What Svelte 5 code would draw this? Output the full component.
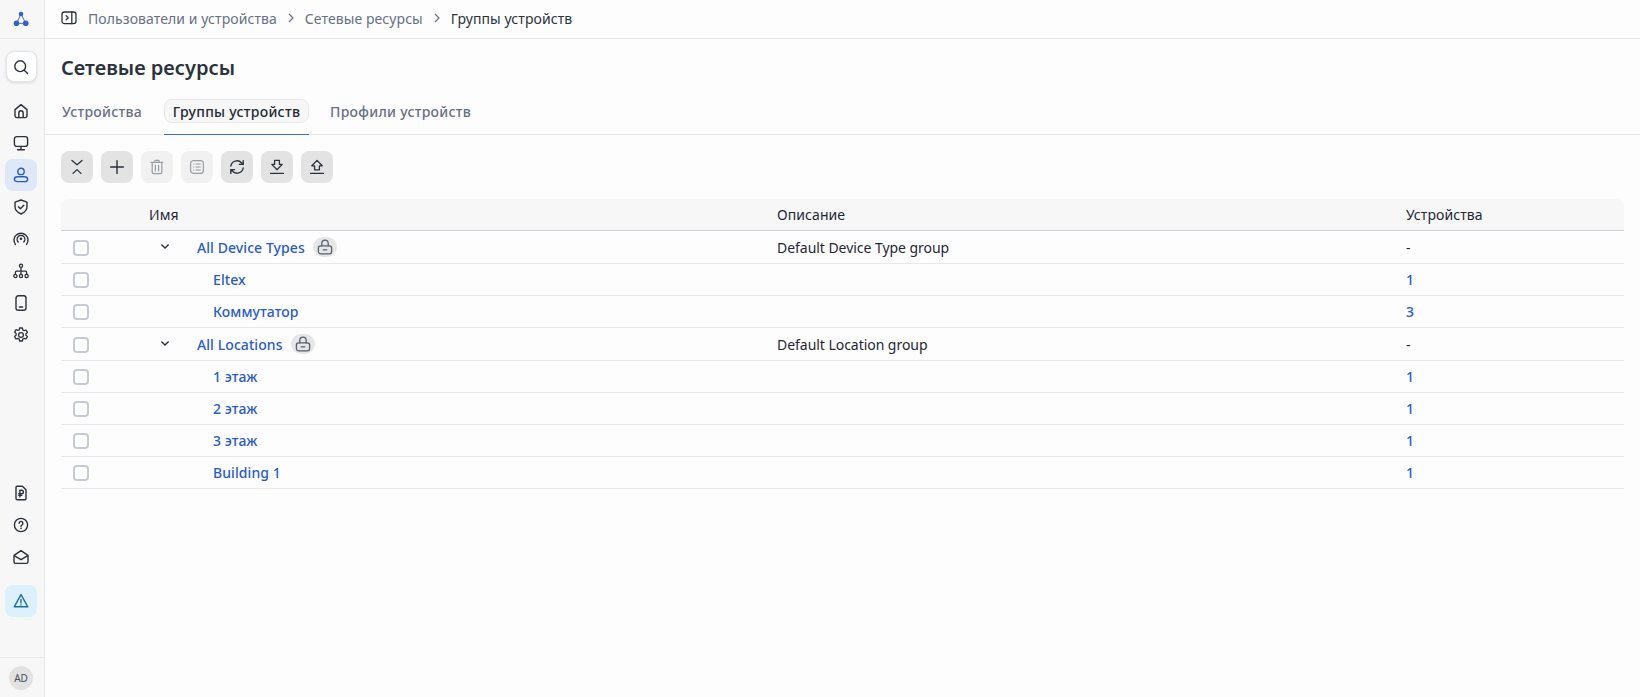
<script lang="ts">
	type Row = { name: string; desc?: string; count: string; root?: boolean };

	const rows: Row[] = [
		{ name: 'All Device Types', desc: 'Default Device Type group', count: '-', root: true },
		{ name: 'Eltex', count: '1' },
		{ name: 'Коммутатор', count: '3' },
		{ name: 'All Locations', desc: 'Default Location group', count: '-', root: true },
		{ name: '1 этаж', count: '1' },
		{ name: '2 этаж', count: '1' },
		{ name: '3 этаж', count: '1' },
		{ name: 'Building 1', count: '1' }
	];
</script>

<div class="shell">
	<aside class="rail">
		<div class="logo">
			<svg viewBox="0 0 20 20" width="20" height="20" aria-hidden="true">
				<path d="M10 5L5.5 14.3h9.2z" fill="none" stroke="#2f5fb8" stroke-width="0.9" />
				<circle cx="10" cy="5" r="2.3" fill="#2f62c9" />
				<circle cx="5.5" cy="14.3" r="2.8" fill="#2f62c9" />
				<circle cx="14.7" cy="14.3" r="2.8" fill="#2f62c9" />
			</svg>
		</div>
		<nav class="nav">
			<button class="search" aria-label="Поиск">
				<svg viewBox="0 0 16 16" width="16" height="16" fill="none" stroke="currentColor" stroke-width="1.4" aria-hidden="true">
					<circle cx="7.2" cy="7.2" r="5.4" />
					<path d="M11.2 11.2l3.4 3.4" stroke-linecap="round" />
				</svg>
			</button>
			<div class="nav-items">
				<span class="item">
					<svg viewBox="0 0 16 16" width="16" height="16" fill="none" stroke="currentColor" stroke-width="1.4" stroke-linejoin="round" aria-hidden="true">
						<path d="M2 6.6l6-5 6 5v6.2a1.8 1.8 0 0 1-1.8 1.8H3.8A1.8 1.8 0 0 1 2 12.8z" />
						<path d="M5.8 14.6V10a2.2 2.2 0 0 1 4.4 0v4.6" />
					</svg>
				</span>
				<span class="item">
					<svg viewBox="0 0 16 16" width="16" height="16" fill="none" stroke="currentColor" stroke-width="1.4" stroke-linecap="round" aria-hidden="true">
						<rect x="1.4" y="1.6" width="13.2" height="9.8" rx="2.4" />
						<path d="M8 11.4v3.2M4.6 14.8h6.8" />
					</svg>
				</span>
				<span class="item active">
					<svg viewBox="0 0 16 16" width="16" height="16" fill="none" stroke="currentColor" stroke-width="1.4" aria-hidden="true">
						<circle cx="8" cy="4.4" r="3.2" />
						<path d="M4.6 9.8h6.8c1.8 0 3.2 1.2 3.2 2.6s-1.4 2.2-3.2 2.2H4.6c-1.8 0-3.2-.8-3.2-2.2s1.4-2.6 3.2-2.6z" />
					</svg>
				</span>
				<span class="item">
					<svg viewBox="0 0 16 16" width="16" height="16" fill="none" stroke="currentColor" stroke-width="1.4" stroke-linecap="round" stroke-linejoin="round" aria-hidden="true">
						<path d="M8 1l6 2.2v4.4c0 3.4-2.5 6-6 7.4-3.5-1.4-6-4-6-7.4V3.2z" />
						<path d="M5.4 7.8l2 2 3.4-3.6" />
					</svg>
				</span>
				<span class="item">
					<svg viewBox="0 0 16 16" width="16" height="16" fill="none" stroke="currentColor" stroke-width="1.4" stroke-linecap="round" aria-hidden="true">
						<circle cx="8" cy="7.8" r="1.3" fill="currentColor" stroke="none" />
						<path d="M5.2 11a3.9 3.9 0 1 1 5.6 0" />
						<path d="M2.4 13.4A7 7 0 1 1 13.6 13.4" />
					</svg>
				</span>
				<span class="item">
					<svg viewBox="0 0 16 16" width="16" height="16" fill="none" stroke="currentColor" stroke-width="1.3" stroke-linejoin="round" aria-hidden="true">
						<circle cx="8" cy="2.8" r="1.6" />
						<circle cx="2.4" cy="13" r="1.6" />
						<circle cx="8" cy="13" r="1.6" />
						<circle cx="13.6" cy="13" r="1.6" />
						<path d="M8 4.4v7M2.4 11.4V9.6q0-1.4 1.4-1.4h8.4q1.4 0 1.4 1.4v1.8" />
					</svg>
				</span>
				<span class="item">
					<svg viewBox="0 0 16 16" width="16" height="16" fill="none" stroke="currentColor" stroke-width="1.4" stroke-linecap="round" aria-hidden="true">
						<rect x="3" y="0.8" width="10" height="14.4" rx="2.2" />
						<path d="M6.4 12h3.2" />
					</svg>
				</span>
				<span class="item">
					<svg viewBox="0 0 16 16" width="16" height="16" fill="none" stroke="currentColor" stroke-width="1.3" stroke-linejoin="round" aria-hidden="true">
						<path d="M6.6 1h2.8l.4 2 1.3.7 1.9-.7 1.4 2.4-1.5 1.3v1.6l1.5 1.3-1.4 2.4-1.9-.7-1.3.7-.4 2H6.6l-.4-2-1.3-.7-1.9.7-1.4-2.4 1.5-1.3V6.4L1.6 5.1 3 2.7l1.9.7L6.2 3z" />
						<circle cx="8" cy="8" r="2.4" />
					</svg>
				</span>
			</div>
			<div class="nav-bottom">
				<span class="item">
					<svg viewBox="0 0 16 16" width="16" height="16" fill="none" stroke="currentColor" stroke-width="1.4" stroke-linecap="round" stroke-linejoin="round" aria-hidden="true">
						<path d="M4 1.2h5.4L13 4.8v8.6a1.4 1.4 0 0 1-1.4 1.4H4.4A1.4 1.4 0 0 1 3 13.4V2.2a1 1 0 0 1 1-1z" />
						<path d="M6.9 12V5.2h1.7a1.7 1.7 0 0 1 0 3.6H5.8M5.8 10.4h3" />
					</svg>
				</span>
				<span class="item">
					<svg viewBox="0 0 16 16" width="16" height="16" fill="none" stroke="currentColor" stroke-width="1.4" stroke-linecap="round" aria-hidden="true">
						<circle cx="8" cy="8" r="6.6" />
						<path d="M6.1 6.2a1.9 1.9 0 1 1 2.9 1.7c-.7.4-1 .8-1 1.5" />
						<circle cx="8" cy="11.4" r=".8" fill="currentColor" stroke="none" />
					</svg>
				</span>
				<span class="item">
					<svg viewBox="0 0 16 16" width="16" height="16" fill="none" stroke="currentColor" stroke-width="1.4" stroke-linejoin="round" aria-hidden="true">
						<path d="M1 6.4L8 1.6l7 4.8v6.4a1.6 1.6 0 0 1-1.6 1.6H2.6A1.6 1.6 0 0 1 1 12.8z" />
						<path d="M1.2 6.6L8 10.6l6.8-4" />
					</svg>
				</span>
				<span class="item alert">
					<svg viewBox="0 0 16 16" width="16" height="16" fill="none" stroke="currentColor" stroke-width="1.4" stroke-linecap="round" stroke-linejoin="round" aria-hidden="true">
						<path d="M8 1.6l6.8 12.2H1.2z" />
						<path d="M8 6.4v3.6" />
						<circle cx="8" cy="12" r=".8" fill="currentColor" stroke="none" />
					</svg>
				</span>
			</div>
		</nav>
		<div class="user"><span class="avatar">AD</span></div>
	</aside>

	<main class="main">
		<header class="crumbs">
			<svg class="panel" viewBox="0 0 16 16" width="16" height="16" fill="none" stroke="currentColor" stroke-width="1.3" stroke-linecap="round" stroke-linejoin="round" aria-hidden="true">
				<rect x="1" y="2" width="14" height="11.6" rx="2.4" />
				<path d="M10.8 2v11.6M5.2 5.8l2 2-2 2" />
			</svg>
			<span class="crumb">Пользователи и устройства</span>
			<svg class="sep" viewBox="0 0 10 10" width="10" height="10" fill="none" stroke="currentColor" stroke-width="1.2" aria-hidden="true"><path d="M3 1l4 4-4 4" /></svg>
			<span class="crumb">Сетевые ресурсы</span>
			<svg class="sep" viewBox="0 0 10 10" width="10" height="10" fill="none" stroke="currentColor" stroke-width="1.2" aria-hidden="true"><path d="M3 1l4 4-4 4" /></svg>
			<span class="crumb current">Группы устройств</span>
		</header>

		<h1>Сетевые ресурсы</h1>

		<div class="tabs">
			<div class="tab">Устройства</div>
			<div class="tab selected"><span>Группы устройств</span></div>
			<div class="tab">Профили устройств</div>
		</div>

		<div class="toolbar">
			<button class="tool" aria-label="Свернуть">
				<svg viewBox="0 0 16 16" width="16" height="16" fill="none" stroke="currentColor" stroke-width="1.3" stroke-linecap="round" stroke-linejoin="round" aria-hidden="true"><path d="M3 1.4L8 5.8l5-4.4M4 14.4l4-3.8 4 3.8" /></svg>
			</button>
			<button class="tool" aria-label="Добавить">
				<svg viewBox="0 0 16 16" width="16" height="16" fill="none" stroke="currentColor" stroke-width="1.4" stroke-linecap="round" aria-hidden="true"><path d="M8 1.6v12.8M1.6 8h12.8" /></svg>
			</button>
			<button class="tool off" aria-label="Удалить">
				<svg viewBox="0 0 16 16" width="16" height="16" fill="none" stroke="currentColor" stroke-width="1.2" stroke-linecap="round" stroke-linejoin="round" aria-hidden="true"><path d="M2 3.4h12M5.6 3.2l.5-1.8h3.8l.5 1.8M3.2 3.6v9.4c0 1 .6 1.6 1.6 1.6h6.4c1 0 1.6-.6 1.6-1.6V3.6M6.4 6.4v5.6M9.6 6.4v5.6" /></svg>
			</button>
			<button class="tool off" aria-label="Список">
				<svg viewBox="0 0 16 16" width="16" height="16" fill="none" stroke="currentColor" stroke-width="1.2" stroke-linecap="round" aria-hidden="true"><rect x="1.6" y="1.6" width="12.8" height="12.8" rx="3" /><path d="M7 5h4.4M7 8h4.4M7 11h4.4M4.6 5h.2M4.6 8h.2M4.6 11h.2" /></svg>
			</button>
			<button class="tool" aria-label="Обновить">
				<svg viewBox="0 0 16 16" width="16" height="16" fill="none" stroke="currentColor" stroke-width="1.4" stroke-linecap="round" stroke-linejoin="round" aria-hidden="true"><path d="M1.8 7a6.2 6.2 0 0 1 10.8-3l1.6 1.4M14.2 1.6v3.8h-3.8M14.2 9a6.2 6.2 0 0 1-10.8 3l-1.6-1.4M1.8 14.4v-3.8h3.8" /></svg>
			</button>
			<button class="tool" aria-label="Скачать">
				<svg viewBox="0 0 16 16" width="16" height="16" fill="none" stroke="currentColor" stroke-width="1.3" stroke-linecap="round" stroke-linejoin="round" aria-hidden="true"><path d="M5.6 1.4h4.8v4h2.8L8 10.8 2.8 5.4h2.8zM1.6 14.4h12.8" /></svg>
			</button>
			<button class="tool" aria-label="Загрузить">
				<svg viewBox="0 0 16 16" width="16" height="16" fill="none" stroke="currentColor" stroke-width="1.3" stroke-linecap="round" stroke-linejoin="round" aria-hidden="true"><path d="M5.6 10.8h4.8v-4h2.8L8 1.4 2.8 6.8h2.8zM1.6 14.4h12.8" /></svg>
			</button>
		</div>

		<div class="table">
			<div class="row head">
				<span></span>
				<span>Имя</span>
				<span>Описание</span>
				<span>Устройства</span>
			</div>
			{#each rows as r}
				<div class="row" class:root={r.root}>
					<span class="check"><i></i></span>
					<span class="name" class:child={!r.root}>
						{#if r.root}
							<span class="caret">
								<svg viewBox="0 0 10 10" width="10" height="10" fill="none" stroke="currentColor" stroke-width="1.4" aria-hidden="true"><path d="M1.4 2.6L5 6l3.6-3.4" /></svg>
							</span>
						{/if}
						<a href="#top">{r.name}</a>
						{#if r.root}
							<span class="lock">
								<svg viewBox="0 0 16 16" width="16" height="16" fill="none" stroke="currentColor" stroke-width="1.3" stroke-linecap="round" aria-hidden="true"><rect x="1.4" y="6.8" width="13.2" height="8" rx="2.2" /><path d="M4.8 6.8V4.4a3.2 3.2 0 0 1 6.4 0v2.4M6.2 10.8h3.6" /></svg>
							</span>
						{/if}
					</span>
					<span class="desc">{r.desc ?? ''}</span>
					<span>
						{#if r.count === '-'}-{:else}<a href="#top">{r.count}</a>{/if}
					</span>
				</div>
			{/each}
		</div>
	</main>
</div>

<style>
	:global(body) {
		margin: 0;
		background: #fdfdfd;
		font-family: 'Noto Sans', sans-serif;
		color: #1f2733;
	}

	.shell {
		display: flex;
		height: 697px;
		overflow: hidden;
	}

	.rail {
		width: 44px;
		flex: none;
		display: flex;
		flex-direction: column;
		background: #f7f7f8;
		border-right: 1px solid #e6e8ec;
	}
	.logo {
		height: 38px;
		flex: none;
		padding-right: 2px;
		display: flex;
		align-items: center;
		justify-content: center;
		border-bottom: 1px solid #e6e8ec;
	}
	.nav {
		flex: 1;
		display: flex;
		flex-direction: column;
		align-items: center;
		padding-top: 12px;
		padding-right: 2px;
	}
	.search {
		width: 31px;
		height: 31px;
		padding: 0;
		display: flex;
		align-items: center;
		justify-content: center;
		border: 1px solid #e2e4e8;
		border-radius: 8px;
		background: #fff;
		color: #2b323c;
		box-shadow: 0 1px 3px rgba(0, 0, 0, 0.12);
	}
	.nav-items,
	.nav-bottom {
		display: flex;
		flex-direction: column;
	}
	.nav-items {
		margin-top: 13px;
	}
	.nav-bottom {
		margin-top: auto;
		margin-bottom: 40px;
	}
	.item {
		width: 32px;
		height: 32px;
		display: flex;
		align-items: center;
		justify-content: center;
		border-radius: 8px;
		color: #2b323c;
	}
	.item.active {
		background: #dfe8f8;
		color: #2c5cb8;
	}
	.item.alert {
		margin-top: 12px;
		background: #dcf1fb;
		color: #1f6f9f;
	}
	.user {
		height: 40px;
		flex: none;
		box-sizing: border-box;
		padding-right: 2px;
		display: flex;
		align-items: center;
		justify-content: center;
		border-top: 1px solid #e6e8ec;
	}
	.avatar {
		width: 24px;
		height: 24px;
		border-radius: 50%;
		background: #e2e2e2;
		color: #4a4f57;
		font-size: 10px;
		display: flex;
		align-items: center;
		justify-content: center;
	}

	.main {
		flex: 1;
		min-width: 0;
		display: flex;
		flex-direction: column;
	}

	.crumbs {
		height: 39px;
		box-sizing: border-box;
		flex: none;
		display: flex;
		align-items: center;
		padding: 0 0 2px 16px;
		border-bottom: 1px solid #e6e8ec;
		font-size: 14px;
		letter-spacing: 0.08px;
		color: #2b323c;
	}
	.panel {
		margin-right: 11px;
	}
	.crumb {
		color: #667085;
	}
	.crumb.current {
		color: #2b323c;
	}
	.sep {
		margin: 0 9px;
		color: #667085;
	}

	h1 {
		margin: 15px 0 0 16px;
		font-size: 20px;
		line-height: 28px;
		font-weight: 600;
		color: #2b323c;
	}

	.tabs {
		margin-top: 17px;
		padding-left: 16px;
		height: 36px;
		box-sizing: border-box;
		flex: none;
		display: flex;
		gap: 21px;
		border-bottom: 1px solid #e6e8ec;
		font-size: 14px;
		font-weight: 500;
		letter-spacing: 0.28px;
		color: #667085;
	}
	.tab {
		line-height: 26px;
	}
	.tab:first-child {
		padding-left: 1px;
	}
	.tab.selected {
		width: 145px;
		margin-left: 1px;
		height: 36px;
		box-sizing: border-box;
		border-bottom: 1px solid #3a6fd8;
		color: #232a34;
	}
	.tab.selected span {
		display: block;
		height: 24px;
		text-align: center;
		background: #f7f7f8;
		border: 1px solid #e8e9ec;
		border-radius: 8px;
		box-sizing: border-box;
		line-height: 24px;
	}

	.toolbar {
		margin: 16px 0 0 16px;
		display: flex;
		gap: 8px;
	}
	.tool {
		width: 32px;
		height: 32px;
		padding: 0;
		border: 0;
		border-radius: 8px;
		background: #e3e3e3;
		color: #2b323c;
		display: flex;
		align-items: center;
		justify-content: center;
	}
	.tool.off {
		background: #f1f1f1;
		color: #9a9fa6;
	}

	.table {
		margin: 16px 16px 0 16px;
		font-size: 14px;
		letter-spacing: 0.08px;
		color: #1f2733;
	}
	.row {
		display: grid;
		grid-template-columns: 88px 628px 629px 1fr;
		align-items: center;
		height: 32px;
		box-sizing: border-box;
		border-bottom: 1px solid #e8e9ec;
	}
	.row.root {
		height: 33px;
	}
	.row.head {
		background: #f7f7f8;
		border-radius: 8px 8px 0 0;
		border-bottom: 1px solid #cfd2dc;
	}
	.row a {
		color: #2a5bc6;
		font-weight: 500;
		text-decoration: none;
	}
	.desc {
		letter-spacing: -0.04px;
	}
	.check {
		padding-left: 12px;
		display: flex;
	}
	.row.root .check {
		padding-top: 1px;
	}
	.check i {
		display: block;
		width: 16px;
		height: 16px;
		box-sizing: border-box;
		border: 2px solid #c5cad6;
		border-radius: 4px;
		background: #fff;
	}
	.name {
		display: flex;
		align-items: center;
	}
	.name.child {
		padding-left: 64px;
	}
	.caret {
		width: 32px;
		margin-right: 16px;
		display: flex;
		justify-content: center;
		color: #2b323c;
	}
	.lock {
		width: 24px;
		height: 20px;
		margin-left: 8px;
		border-radius: 12px;
		background: #e6e6e6;
		color: #566071;
		display: flex;
		align-items: center;
		justify-content: center;
	}
</style>
